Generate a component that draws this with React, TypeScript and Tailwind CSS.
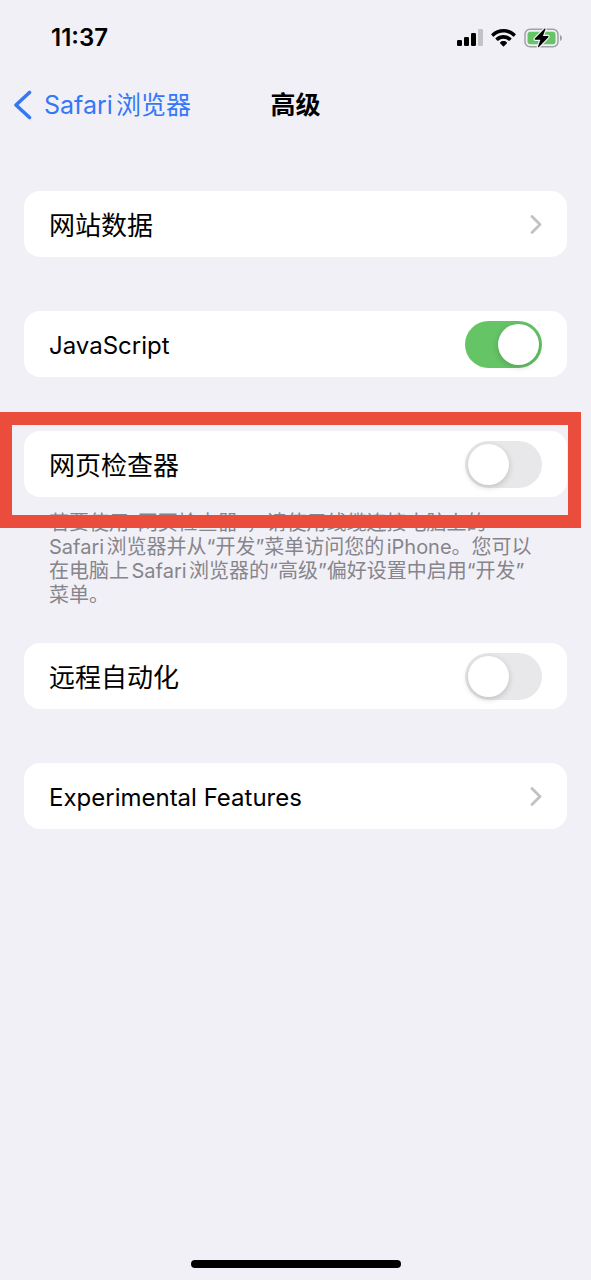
import { useState } from "react";
import type { ReactNode } from "react";

function SignalIcon() {
  return (
    <svg width="26" height="18" viewBox="0 0 26 18" aria-hidden="true">
      <rect x="0" y="11" width="5" height="6" rx="1.3" fill="#000" />
      <rect x="7" y="8" width="5" height="9" rx="1.3" fill="#000" />
      <rect x="14" y="4" width="5" height="13" rx="1.3" fill="#000" />
      <rect x="21" y="0" width="5" height="17" rx="1.3" fill="#c3c3c7" />
    </svg>
  );
}

function WifiIcon() {
  return (
    <svg width="25" height="18" viewBox="0 0 25 18" aria-hidden="true" fill="#000">
      <path d="M12.5 0C7.9 0 3.6 1.8.4 4.9c-.3.3-.3.6 0 .9l1.6 1.6c.3.3.6.3.9 0C5.5 5 8.900 3.600 12.500 3.600S19.500 5 22.100 7.400c.3.3.6.3.9 0l1.600-1.600c.3-.3.3-.6 0-.9C21.400 1.800 17.100 0 12.500 0z" />
      <path d="M12.500 6.100c-3 0-5.700 1.100-7.800 3-.3.3-.3.6 0 .9l1.700 1.700c.2.200.6.200.9 0 1.400-1.300 3.200-2 5.200-2s3.800.7 5.200 2c.3.200.700.200.900 0l1.700-1.700c.3-.3.3-.6 0-.9-2.100-1.900-4.800-3-7.800-3z" />
      <path d="M12.500 12.100c-1.300 0-2.500.5-3.400 1.300-.3.200-.3.600 0 .9l2.900 3c.3.300.700.300 1 0l2.900-3c.3-.3.3-.7 0-.9-.9-.8-2.100-1.300-3.400-1.300z" />
    </svg>
  );
}

function BatteryIcon() {
  return (
    <svg width="39" height="20" viewBox="0 0 39 20" aria-hidden="true">
      <rect x="1" y="1.200" width="33" height="17.600" rx="5" fill="none" stroke="#a0a0a5" strokeWidth="1.500" />
      <rect x="3.500" y="3.700" width="28" height="12.600" rx="2.800" fill="#65c466" />
      <path d="M36 7v6c1.300-.5 2-1.700 2-3s-.700-2.500-2-3z" fill="#a0a0a5" />
      <path
        d="M20.500 0.800 10.900 10.600c-.5.600-.2 1.200.5 1.200h5l-2.400 6.800c-.2.800.3 1 .9.500l9.400-9.900c.5-.6.2-1.200-.5-1.200h-4.900L21.400 1.200c.2-.7-.4-.9-.9-.4z"
        fill="#000"
        stroke="#f1f0f6"
        strokeWidth="2.400"
        paintOrder="stroke"
      />
    </svg>
  );
}

function DisclosureIcon() {
  return (
    <svg width="12" height="19" viewBox="0 0 12 19" fill="none" aria-hidden="true">
      <path d="M2 1.500 10 9.500 2 17.500" stroke="#c2c2c6" strokeWidth="2.800" strokeLinecap="round" strokeLinejoin="round" />
    </svg>
  );
}

const rowClass = "flex h-[66px] items-center justify-between rounded-2xl bg-white px-[25px] text-black";

function LinkRow({ children }: { children: ReactNode }) {
  return (
    <a href="#" className={rowClass}>
      {children}
      <DisclosureIcon />
    </a>
  );
}

function SwitchRow({ children, initial = false }: { children: ReactNode; initial?: boolean }) {
  const [on, setOn] = useState(initial);
  return (
    <label className={rowClass}>
      {children}
      <input
        type="checkbox"
        role="switch"
        checked={on}
        onChange={(e) => setOn(e.target.checked)}
        className="h-[47px] w-[77px] shrink-0 cursor-pointer appearance-none rounded-full bg-[#e8e8ea] p-[3px] transition-colors before:block before:size-[41px] before:rounded-full before:bg-white before:shadow-[0_2px_6px_rgba(0,0,0,0.18)] before:transition-transform checked:bg-[#65c466] checked:before:translate-x-[30px]"
      />
    </label>
  );
}

function Latin({ children }: { children: ReactNode }) {
  return <span className="pt-1 text-[24px]">{children}</span>;
}

function Hans({ children }: { children: ReactNode }) {
  return <span className="pt-0.5 text-[26px]">{children}</span>;
}

export default function App() {
  return (
    <div
      lang="zh-CN"
      className="flex min-h-screen flex-col overflow-x-hidden bg-[#f1f0f6] font-['Inter','Noto_Sans_CJK_SC',sans-serif] text-black [text-autospace:normal]"
    >
      <div className="flex h-[76px] items-center justify-between pr-7 pl-[51px]">
        <time className="text-[24px] font-semibold">11:37</time>
        <div className="flex items-center gap-2">
          <SignalIcon />
          <WifiIcon />
          <BatteryIcon />
        </div>
      </div>

      <header className="grid h-[58px] grid-cols-[1fr_auto_1fr] items-center px-3">
        <a href="#" className="flex items-center gap-3 text-[25px] text-[#3478f6]">
          <svg width="20" height="30" viewBox="0 0 20 30" fill="none" aria-hidden="true">
            <path d="M17.500 2.500 4 15l13.500 12.500" stroke="#3478f6" strokeWidth="3.600" strokeLinecap="round" strokeLinejoin="round" />
          </svg>
          <span className="pt-0.5">Safari浏览器</span>
        </a>
        <h1 className="pt-0.5 text-[25px] font-bold">高级</h1>
      </header>

      <main className="mt-[57px] flex flex-col gap-[54px] px-6">
        <LinkRow>
          <Hans>网站数据</Hans>
        </LinkRow>
        <SwitchRow initial>
          <Latin>JavaScript</Latin>
        </SwitchRow>
        <section className="-mb-[18px]">
          <div className="relative">
            <SwitchRow>
              <Hans>网页检查器</Hans>
            </SwitchRow>
            <div className="pointer-events-none absolute -top-[19px] -right-[14px] -bottom-[31px] -left-[25px] z-10 border-[13px] border-[#eb4d3d]" />
          </div>
          <p className="px-[25px] pt-[14px] text-[20px] leading-6 whitespace-nowrap text-[#85858b]">
            若要使用“网页检查器”，请使用线缆连接电脑上的
            <br />
            Safari浏览器并从“开发”菜单访问您的iPhone。您可以
            <br />
            在电脑上Safari浏览器的“高级”偏好设置中启用“开发”
            <br />
            菜单。
          </p>
        </section>
        <SwitchRow>
          <Hans>远程自动化</Hans>
        </SwitchRow>
        <LinkRow>
          <Latin>Experimental Features</Latin>
        </LinkRow>
      </main>

      <footer className="mt-auto flex justify-center pb-3">
        <div className="h-2 w-[210px] rounded-full bg-black" />
      </footer>
    </div>
  );
}
